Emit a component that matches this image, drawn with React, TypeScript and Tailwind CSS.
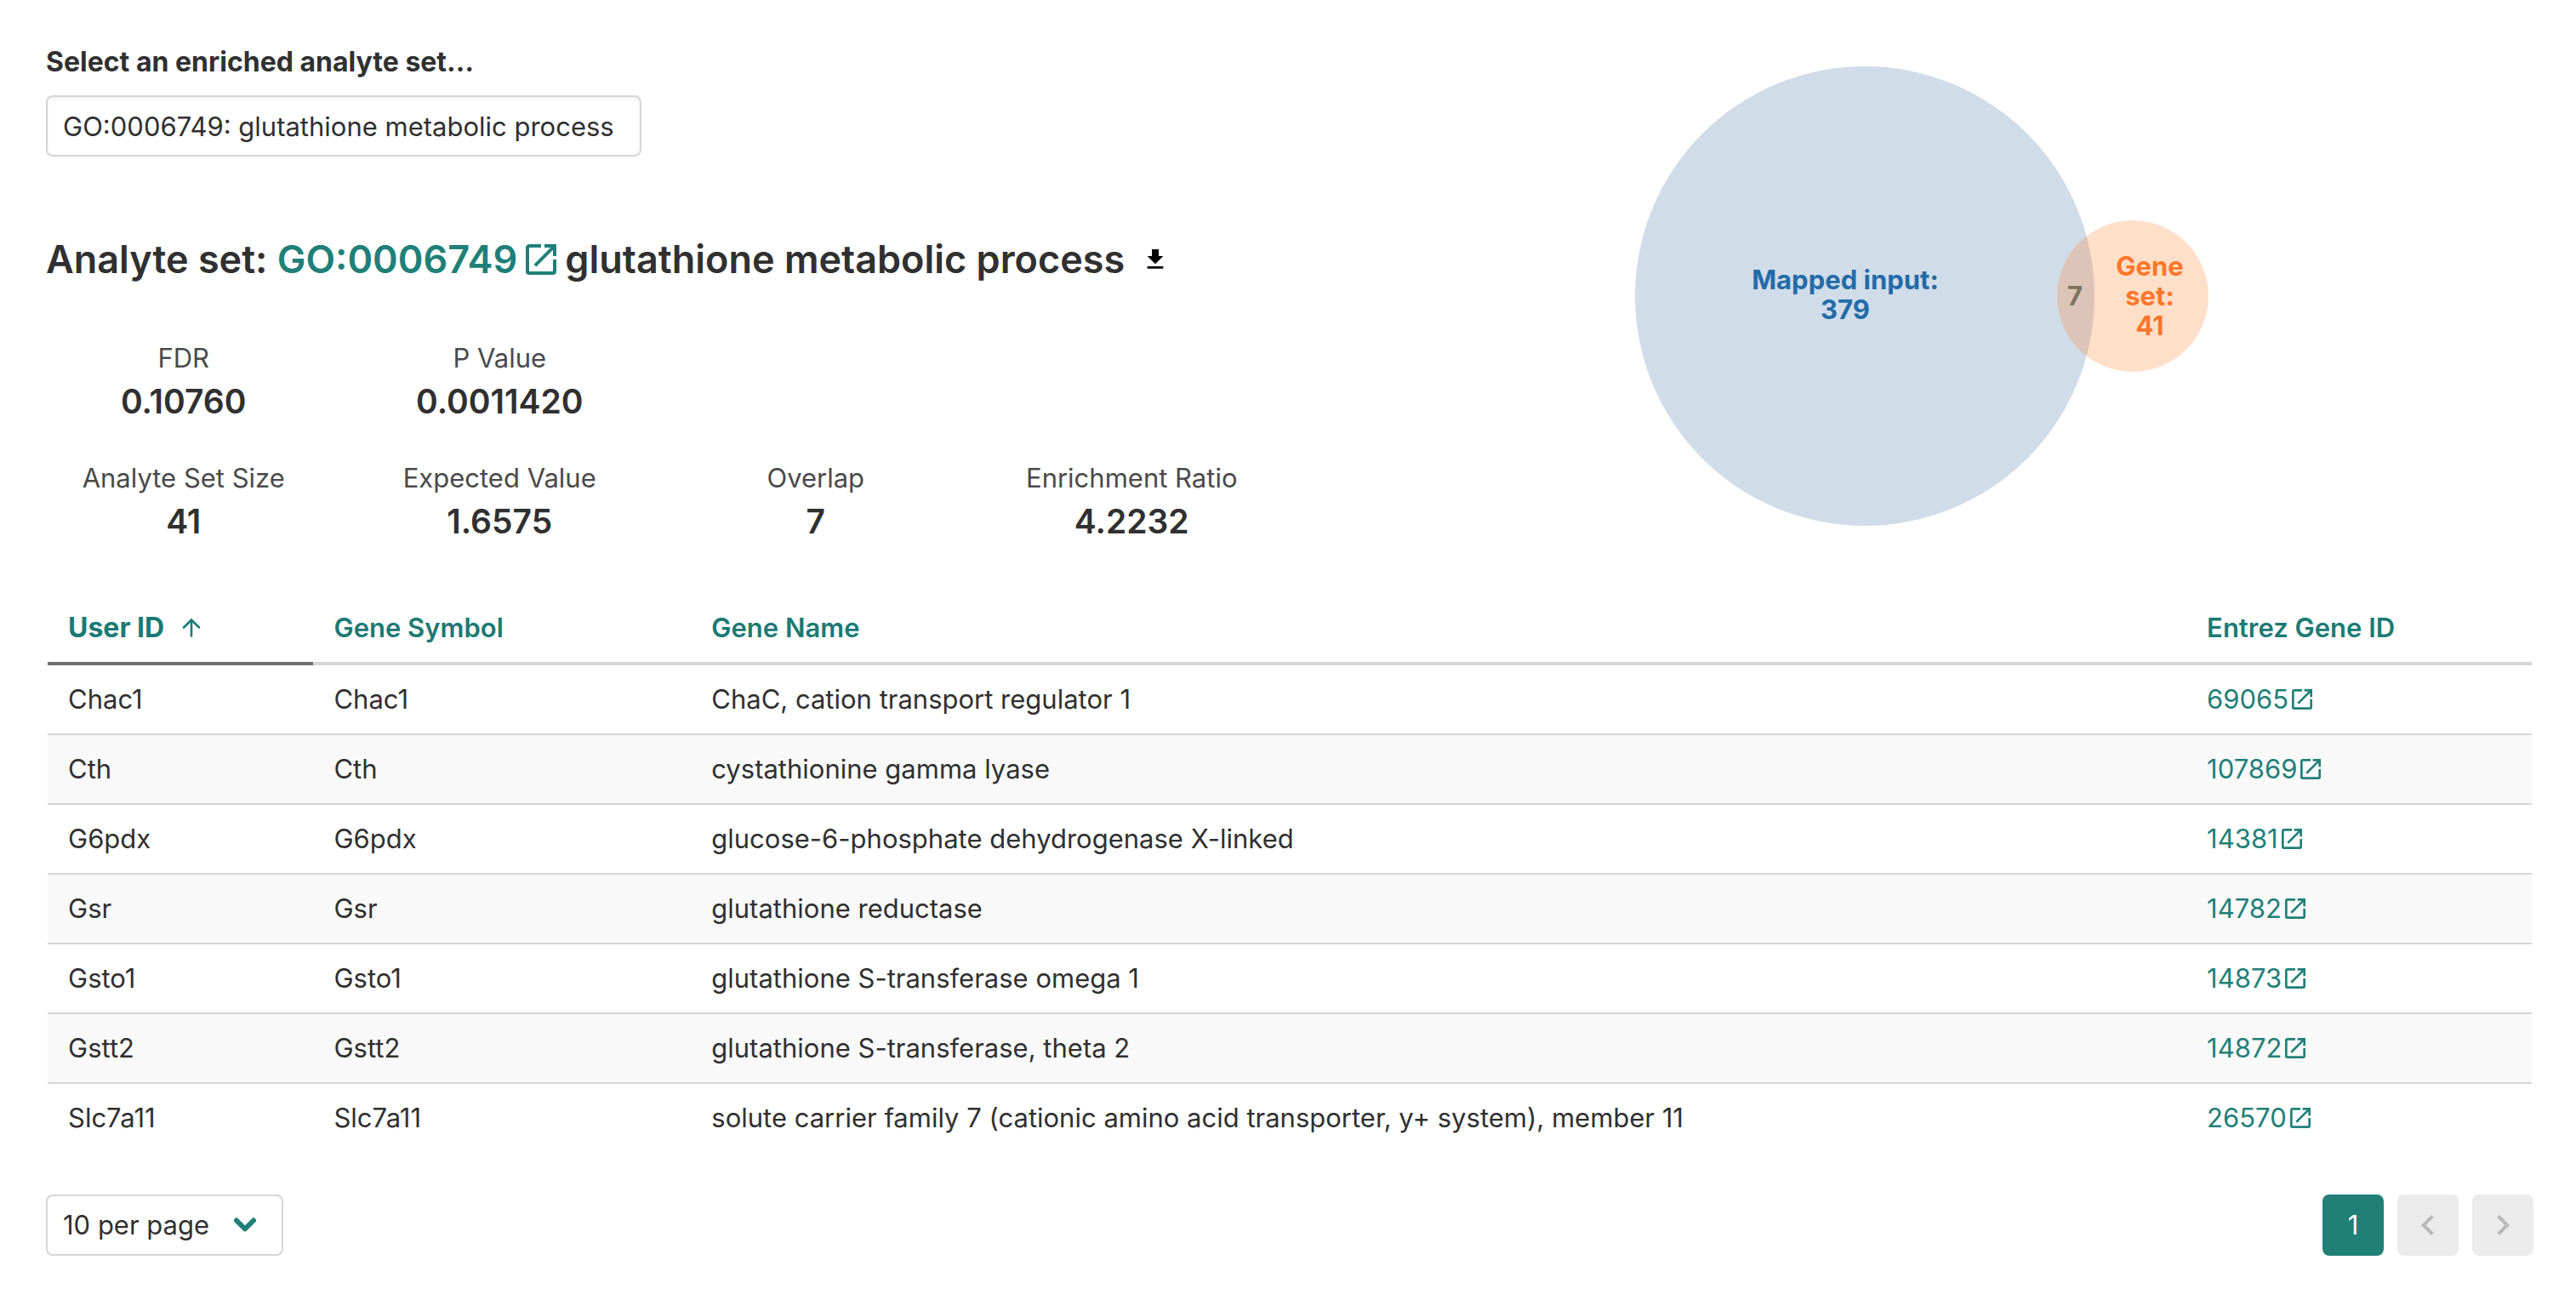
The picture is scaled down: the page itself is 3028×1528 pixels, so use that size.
import React from "react";

const OPEN_IN_NEW =
  "M14,3V5H17.59L7.76,14.83L9.17,16.24L19,6.41V10H21V3M19,19H5V5H12V3H5C3.89,3 3,3.9 3,5V19A2,2 0 0,0 5,21H19A2,2 0 0,0 21,19V12H19V19Z";

function Icon({ d, className }: { d: string; className: string }) {
  return (
    <svg viewBox="0 0 24 24" fill="currentColor" className={className} aria-hidden="true">
      <path d={d} />
    </svg>
  );
}

const genes = [
  { id: "Chac1", name: "ChaC, cation transport regulator 1", entrez: "69065" },
  { id: "Cth", name: "cystathionine gamma lyase", entrez: "107869" },
  { id: "G6pdx", name: "glucose-6-phosphate dehydrogenase X-linked", entrez: "14381" },
  { id: "Gsr", name: "glutathione reductase", entrez: "14782" },
  { id: "Gsto1", name: "glutathione S-transferase omega 1", entrez: "14873" },
  { id: "Gstt2", name: "glutathione S-transferase, theta 2", entrez: "14872" },
  {
    id: "Slc7a11",
    name: "solute carrier family 7 (cationic amino acid transporter, y+ system), member 11",
    entrez: "26570",
  },
];

function Stat({ label, value }: { label: string; value: string }) {
  return (
    <div className="text-center">
      <dt className="text-[31px] leading-[48px] text-[#4a4a4a]">{label}</dt>
      <dd className="text-[39px] leading-[54px] font-semibold">{value}</dd>
    </div>
  );
}

function Venn() {
  return (
    <svg viewBox="0 0 700 560" className="h-[560px] w-[700px]" role="img" aria-label="Overlap of mapped input and gene set">
      <circle cx="283" cy="280" r="270" fill="#d0dce8" />
      <circle cx="598" cy="280" r="89" fill="#fd8d3c" fillOpacity="0.28" />
      <g textAnchor="middle" fontSize="31" fontWeight="700">
        <g fill="#236ba8">
          <text x="260" y="272">Mapped input:</text>
          <text x="260" y="307">379</text>
        </g>
        <text x="530" y="291" fill="#7c745f">7</text>
        <g fill="#ff762b">
          <text x="618" y="256">Gene</text>
          <text x="618" y="291">set:</text>
          <text x="618" y="326">41</text>
        </g>
      </g>
    </svg>
  );
}

function GeneTable() {
  return (
    <table className="w-full table-fixed border-collapse text-left text-[31px] leading-[48px]">
      <colgroup>
        <col className="w-[10.7%]" />
        <col className="w-[15.2%]" />
        <col className="w-[60.2%]" />
        <col className="w-[13.9%]" />
      </colgroup>
      <thead className="text-[#1b7a74]">
        <tr>
          <th className="border-b-4 border-[#707070] px-6 py-4 text-[32px] leading-[48px] font-bold">
            <button type="button" className="flex items-center">
              User ID
              <svg viewBox="0 0 32 32" className="ml-4 size-8" fill="none" stroke="currentColor" strokeWidth="2.600" strokeLinecap="round" aria-hidden="true">
                <path d="M16 25.500V6.500M7 15.500L16 6.500L25 15.500" />
              </svg>
            </button>
          </th>
          {["Gene Symbol", "Gene Name", "Entrez Gene ID"].map((h) => (
            <th key={h} className="border-b-4 border-[#d6d6d6] px-6 py-4 font-semibold">
              <button type="button">{h}</button>
            </th>
          ))}
        </tr>
      </thead>
      <tbody>
        {genes.map((g) => (
          <tr key={g.id} className="border-b-2 border-[#d6d6d6] even:bg-[#f9f9f9] last:border-b-0">
            <td className="px-6 py-4">{g.id}</td>
            <td className="px-6 py-4">{g.id}</td>
            <td className="px-6 py-4">{g.name}</td>
            <td className="px-6 py-4">
              <a href={`#${g.entrez}`} className="flex items-center text-[#208078]">
                {g.entrez}
                <Icon d={OPEN_IN_NEW} className="size-8" />
              </a>
            </td>
          </tr>
        ))}
      </tbody>
    </table>
  );
}

export default function App() {
  return (
    <main className="bg-white pt-[49px] pr-[50px] pb-[52px] pl-[54px] font-['Inter',sans-serif] text-[#303030]">
      <div className="-mx-6 grid grid-cols-2">
        <div>
          <div className="px-6">
            <label htmlFor="analyte-set" className="block text-[32px] leading-[48px] font-bold">
              Select an enriched analyte set…
            </label>
            <input
              id="analyte-set"
              type="text"
              defaultValue="GO:0006749: glutathione metabolic process"
              className="mt-[15px] h-[72px] w-[700px] rounded-lg border-2 border-[#d6d6d6] px-[18px] text-[31px] leading-[48px] shadow-[inset_0_2px_4px_rgba(0,0,0,0.06)]"
            />
          </div>
          <div className="mt-[85px] flex items-center px-6">
            <h2 className="flex items-center text-[45px] leading-[72px] font-semibold whitespace-pre">
              Analyte set:{" "}
              <a href="#GO:0006749" className="flex items-center gap-1 pr-1 text-[#208078]">
                GO:0006749
                <Icon d={OPEN_IN_NEW} className="size-12" />
              </a>
              glutathione metabolic process
            </h2>
            <button type="button" aria-label="Download" className="ml-5 text-black">
              <Icon d="M5,20H19V18H5M19,9H15V3H9V9H5L12,16L19,9Z" className="size-8" />
            </button>
          </div>
          <dl className="mt-[56px] grid grid-cols-4 gap-y-[39px]">
            <Stat label="FDR" value="0.10760" />
            <Stat label="P Value" value="0.0011420" />
            <div className="col-span-2" />
            <Stat label="Analyte Set Size" value="41" />
            <Stat label="Expected Value" value="1.6575" />
            <Stat label="Overlap" value="7" />
            <Stat label="Enrichment Ratio" value="4.2232" />
          </dl>
        </div>
        <div className="mt-[19px] flex justify-center">
          <Venn />
        </div>
      </div>
      <div className="mx-0.5 mt-[58px]">
        <GeneTable />
      </div>
      <footer className="mt-[50px] flex items-center justify-between text-[31px]">
        <div className="relative">
          <select
            aria-label="Rows per page"
            className="h-[72px] w-[279px] appearance-none rounded-lg border-2 border-[#d6d6d6] bg-white px-[18px] text-[31px] leading-[48px]"
          >
            <option>10 per page</option>
          </select>
          <svg viewBox="0 0 26 18" className="pointer-events-none absolute top-[27px] right-8 h-[18px] w-[26px]" fill="none" stroke="#208078" strokeWidth="6" strokeLinecap="round" strokeLinejoin="round" aria-hidden="true">
            <path d="M3 3.500L13 13.500L23 3.500" />
          </svg>
        </div>
        <nav className="flex gap-4" aria-label="Pagination">
          <button type="button" className="size-[72px] rounded-lg bg-[#208078] text-white">1</button>
          <button type="button" aria-label="Previous page" className="flex size-[72px] items-center justify-center rounded-lg bg-[#ebebeb] text-[#b8b8b8]">
            <Icon d="M15.41,16.58L10.83,12L15.41,7.41L14,6L8,12L14,18L15.41,16.58Z" className="size-12" />
          </button>
          <button type="button" aria-label="Next page" className="flex size-[72px] items-center justify-center rounded-lg bg-[#ebebeb] text-[#b8b8b8]">
            <Icon d="M8.59,16.58L13.17,12L8.59,7.41L10,6L16,12L10,18L8.59,16.58Z" className="size-12" />
          </button>
        </nav>
      </footer>
    </main>
  );
}
